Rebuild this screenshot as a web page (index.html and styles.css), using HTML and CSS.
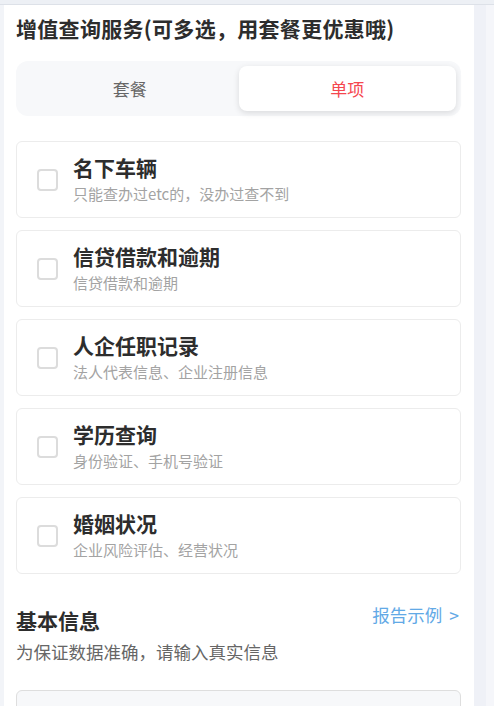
FILE: index.html
```html
<!DOCTYPE html>
<html lang="zh-CN">
<head>
<meta charset="utf-8">
<title>增值查询服务</title>
<link rel="stylesheet" href="styles.css">
</head>
<body>
<div class="topbar"></div>
<div class="layout">
  <div class="gutter"></div>
  <main class="panel">
    <h2 class="heading">增值查询服务(可多选，用套餐更优惠哦)</h2>
    <div class="segment">
      <div class="seg-tab">套餐</div>
      <div class="seg-tab active">单项</div>
    </div>
    <div class="cards">
      <div class="card">
        <span class="checkbox"></span>
        <div class="card-text">
          <div class="card-title">名下车辆</div>
          <div class="card-sub">只能查办过etc的，没办过查不到</div>
        </div>
      </div>
      <div class="card">
        <span class="checkbox"></span>
        <div class="card-text">
          <div class="card-title">信贷借款和逾期</div>
          <div class="card-sub">信贷借款和逾期</div>
        </div>
      </div>
      <div class="card">
        <span class="checkbox"></span>
        <div class="card-text">
          <div class="card-title">人企任职记录</div>
          <div class="card-sub">法人代表信息、企业注册信息</div>
        </div>
      </div>
      <div class="card">
        <span class="checkbox"></span>
        <div class="card-text">
          <div class="card-title">学历查询</div>
          <div class="card-sub">身份验证、手机号验证</div>
        </div>
      </div>
      <div class="card">
        <span class="checkbox"></span>
        <div class="card-text">
          <div class="card-title">婚姻状况</div>
          <div class="card-sub">企业风险评估、经营状况</div>
        </div>
      </div>
    </div>
    <div class="section-head">
      <h3 class="section-title">基本信息</h3>
      <a class="example-link">报告示例<span class="arrow">&gt;</span></a>
    </div>
    <p class="section-desc">为保证数据准确，请输入真实信息</p>
    <div class="input-box"></div>
  </main>
  <div class="rail"></div>
  <div class="rail-edge"></div>
</div>
</body>
</html>
```

FILE: styles.css
```css
* {
  box-sizing: border-box;
}
html, body {
  margin: 0;
  padding: 0;
  height: 100%;
  overflow: hidden;
}
body {
  background: #f1f3f8;
  font-family: "Noto Sans CJK SC", "Noto Sans", sans-serif;
  color: #333;
}
.topbar {
  height: 5px;
  background: #edf0f5;
  border-bottom: 1px solid #dde1e8;
}
.layout {
  display: flex;
  height: 701px;
}
.gutter {
  width: 4px;
  background: #f2f4f8;
}
.panel {
  width: 470px;
  background: #fff;
  padding: 0 13px 0 12px;
}
.rail {
  width: 12px;
  background: #eff1f7;
}
.rail-edge {
  flex: 1;
  background: #f5f6fa;
}
.heading {
  margin: 8px 0 18px;
  font-size: 21px;
  line-height: 30px;
  font-weight: 700;
  letter-spacing: 0.3px;
  color: #2d2d2d;
  white-space: nowrap;
}
.segment {
  display: flex;
  height: 55px;
  padding: 5px;
  background: #f7f8fa;
  border-radius: 12px;
}
.seg-tab {
  flex: 1;
  display: flex;
  align-items: center;
  justify-content: center;
  font-size: 17px;
  color: #666;
  border-radius: 8px;
}
.seg-tab.active {
  background: #fff;
  color: #f5474f;
  box-shadow: 0 2px 6px rgba(0, 0, 0, 0.12);
}
.cards {
  display: flex;
  flex-direction: column;
  gap: 12px;
  margin-top: 25px;
}
.card {
  display: flex;
  align-items: center;
  gap: 15px;
  height: 77px;
  padding: 0 20px;
  border: 1px solid #ececec;
  border-radius: 6px;
}
.checkbox {
  flex: none;
  width: 21px;
  height: 22px;
  border: 2px solid #dcdcdc;
  border-radius: 4px;
  margin-top: 1px;
}
.card-text {
  display: flex;
  flex-direction: column;
  margin-top: -3px;
}
.card-title {
  font-size: 21px;
  line-height: 28px;
  font-weight: 700;
  color: #2d2d2d;
}
.card-sub {
  margin-top: 3px;
  font-size: 15px;
  line-height: 20px;
  color: #a3a3a3;
}
.section-head {
  display: flex;
  justify-content: space-between;
  align-items: flex-start;
  margin-top: 31px;
}
.section-title {
  margin: 0;
  font-size: 21px;
  line-height: 30px;
  font-weight: 700;
  color: #2d2d2d;
}
.example-link {
  font-size: 17.5px;
  line-height: 20px;
  color: #62a9e6;
  margin-right: 2px;
}
.arrow {
  margin-left: 7px;
}
.section-desc {
  margin: 5px 0 0;
  font-size: 17.5px;
  line-height: 24px;
  color: #666;
}
.input-box {
  margin-top: 26px;
  height: 52px;
  background: #f7f8fa;
  border: 1px solid #dedede;
  border-radius: 6px;
}
```
